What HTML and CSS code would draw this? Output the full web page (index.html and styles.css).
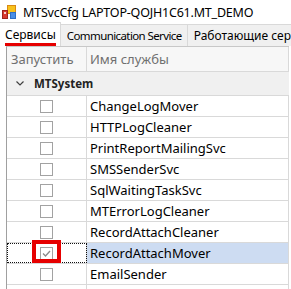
FILE: index.html
```html
<!DOCTYPE html>
<html lang="ru">

<head>
    <meta charset="UTF-8">
    <title>MTSvcCfg</title>
    <link rel="stylesheet" href="styles.css">
</head>

<body>
    <div class="titlebar">
        <svg class="app-icon" width="14" height="15" viewBox="0 0 14 15">
            <rect x="5.5" y="0.5" width="8" height="8" fill="#f7c21c" stroke="#d98a12"/>
            <rect x="8.5" y="7.5" width="5" height="6" fill="#4a8ee6" stroke="#2f6fc4"/>
            <rect x="0.5" y="5.5" width="5" height="8" fill="#d83a2e" stroke="#9e241c"/>
            <rect x="2" y="7" width="2" height="2" fill="#f3d2cf"/>
        </svg>
        <span class="title">MTSvcCfg LAPTOP-QOJH1C61.MT_DEMO</span>
    </div>

    <div class="tabs">
        <div class="tab active"><span class="tab-label">Сервисы</span></div>
        <div class="tab tab-latin">Communication Service</div>
        <div class="tab">Работающие сервисы</div>
    </div>

    <div class="page">
        <div class="grid">
            <div class="grid-row head">
                <div class="cell col-run">Запустить</div>
                <div class="cell col-name">Имя службы</div>
            </div>
            <div class="group-row">
                <svg class="chevron" width="8" height="5" viewBox="0 0 8 5">
                    <path d="M0.5 0.5 L4 4 L7.5 0.5" fill="none" stroke="#404040" stroke-width="1.2"/>
                </svg>
                <span>MTSystem</span>
            </div>
            <div class="grid-row">
                <div class="cell col-run"><span class="checkbox"></span></div>
                <div class="cell col-name">ChangeLogMover</div>
            </div>
            <div class="grid-row">
                <div class="cell col-run"><span class="checkbox"></span></div>
                <div class="cell col-name">HTTPLogCleaner</div>
            </div>
            <div class="grid-row">
                <div class="cell col-run"><span class="checkbox"></span></div>
                <div class="cell col-name">PrintReportMailingSvc</div>
            </div>
            <div class="grid-row">
                <div class="cell col-run"><span class="checkbox"></span></div>
                <div class="cell col-name">SMSSenderSvc</div>
            </div>
            <div class="grid-row">
                <div class="cell col-run"><span class="checkbox"></span></div>
                <div class="cell col-name">SqlWaitingTaskSvc</div>
            </div>
            <div class="grid-row">
                <div class="cell col-run"><span class="checkbox"></span></div>
                <div class="cell col-name">MTErrorLogCleaner</div>
            </div>
            <div class="grid-row">
                <div class="cell col-run"><span class="checkbox"></span></div>
                <div class="cell col-name">RecordAttachCleaner</div>
            </div>
            <div class="grid-row selected">
                <div class="cell col-run focused">
                    <span class="checkbox checked">
                        <svg width="9" height="7" viewBox="0 0 9 7">
                            <path d="M1 3.5 L3.5 6 L8 1" fill="none" stroke="#8a8a8a" stroke-width="1.3"/>
                        </svg>
                    </span>
                    <span class="highlight"></span>
                </div>
                <div class="cell col-name">RecordAttachMover</div>
            </div>
            <div class="grid-row">
                <div class="cell col-run"><span class="checkbox"></span></div>
                <div class="cell col-name">EmailSender</div>
            </div>
            <div class="grid-row">
                <div class="cell col-run"><span class="checkbox"></span></div>
                <div class="cell col-name">&nbsp;</div>
            </div>
        </div>
    </div>
</body>

</html>
```

FILE: styles.css
```css
* {
    margin: 0;
    padding: 0;
    box-sizing: border-box;
}

body {
    width: 291px;
    height: 289px;
    overflow: hidden;
    background: #fff;
    color: #000;
    font-family: 'Noto Sans', 'Open Sans', sans-serif;
    font-size: 13px;
}

.titlebar {
    height: 21px;
    display: flex;
    align-items: center;
    gap: 7px;
    padding: 3px 0 0 2px;
}

.app-icon {
    flex-shrink: 0;
}

.title {
    font-size: 12.5px;
    letter-spacing: -0.2px;
    white-space: nowrap;
}

.tabs {
    height: 25px;
    display: flex;
    align-items: flex-end;
    white-space: nowrap;
    overflow: hidden;
    background: #fff;
    font-size: 12px;
}

.tab {
    height: 22px;
    flex-shrink: 0;
    display: flex;
    align-items: center;
    padding: 0 5px 1px 6px;
    background: #f0f0f0;
    border: 1px solid #d9d9d9;
    border-bottom: none;
    border-left: none;
}

.tab-latin {
    font-size: 11.5px;
    letter-spacing: -0.6px;
}

.tab.active {
    height: 24px;
    background: #fff;
    padding: 0 4px 0 5px;
}

.tab-label {
    display: inline-block;
    border-bottom: 3px solid #e60000;
    line-height: 16px;
    margin-top: 3px;
}

.page {
    padding: 0 0 0 6px;
}

.grid {
    width: 283px;
    border-left: 1px solid #a0a0a0;
    border-top: 1px solid #c8c8c8;
}

.grid-row {
    display: flex;
    height: 21px;
    border-bottom: 1px solid #d9d9d9;
}

.cell {
    display: flex;
    align-items: center;
    border-right: 1px solid #d9d9d9;
}

.col-run {
    width: 80px;
    justify-content: center;
    position: relative;
}

.col-name {
    width: 202px;
    padding-left: 3px;
    white-space: nowrap;
}

.head {
    height: 25px;
    background: #f7f7f7;
    color: #707070;
}

.head .col-run {
    justify-content: flex-start;
    padding-left: 4px;
}

.group-row {
    height: 24px;
    display: flex;
    align-items: center;
    background: #f0f0f0;
    border-bottom: 1px solid #d9d9d9;
    font-size: 11.5px;
    font-weight: bold;
    color: #222;
    padding-left: 9px;
    gap: 10px;
}

.checkbox {
    width: 13px;
    height: 13px;
    border: 1px solid #a2a2a2;
    background: #fff;
    display: flex;
    align-items: center;
    justify-content: center;
}

.selected .col-name {
    background: #cddcf2;
}

.focused {
    outline: 1px dotted #111;
    outline-offset: -1px;
}

/* red annotation frame over the checkbox */
.highlight {
    position: absolute;
    left: 25px;
    top: -3px;
    width: 29px;
    height: 23px;
    border: 4px solid #e60000;
}
```
